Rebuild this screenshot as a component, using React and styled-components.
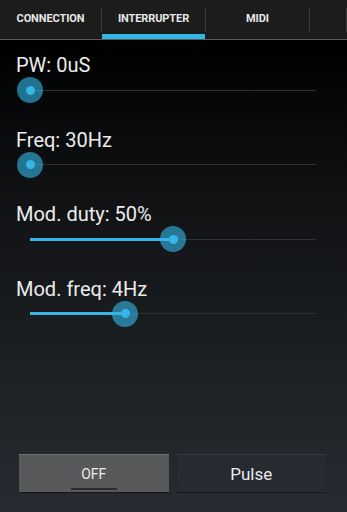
import React from 'react';
import styled, { createGlobalStyle } from 'styled-components';

const GlobalStyle = createGlobalStyle`
    html, body, #root {
        margin: 0;
        padding: 0;
        height: 100%;
    }
    body {
        font-family: Roboto, "Liberation Sans", sans-serif;
        background: #000;
        overflow: hidden;
    }
`;

const Screen = styled.div`
    display: flex;
    flex-direction: column;
    height: 512px;
    width: 347px;
    background: linear-gradient(to bottom, #000 40px, #101214 200px, #282c32 512px);
`;

const TabBar = styled.div`
    display: flex;
    align-items: center;
    height: 39px;
    background: #1c1c1c;
    border-bottom: 1px solid #5a5a5a;
    overflow: hidden;
`;

const Tab = styled.div`
    flex-shrink: 0;
    width: ${p => p.w}px;
    height: 39px;
    display: flex;
    align-items: center;
    justify-content: center;
    padding-bottom: 2px;
    box-sizing: border-box;
    font-size: 11px;
    font-weight: bold;
    color: #e8e8e8;
    letter-spacing: -0.1px;
    box-shadow: ${p => (p.active ? 'inset 0 -5px 0 #33b5e5' : 'none')};
`;

const Divider = styled.div`
    flex-shrink: 0;
    width: 1px;
    height: 24px;
    background: #3c3c3c;
`;

const Content = styled.div`
    display: flex;
    flex-direction: column;
    padding: 14px 0 0 16px;
`;

const Section = styled.div`
    height: 74.5px;
`;

const Label = styled.div`
    font-size: 20px;
    line-height: 22px;
    color: #ececec;
`;

const SliderRow = styled.div`
    position: relative;
    height: 28px;
    width: 286px;
    margin-left: 14px;
    display: flex;
    align-items: center;
`;

const Track = styled.div`
    width: 100%;
    height: 1px;
    background: #2e3236;
`;

const Fill = styled.div`
    position: absolute;
    left: 0;
    top: 12.5px;
    height: 3px;
    background: #33b5e5;
`;

const Thumb = styled.div`
    position: absolute;
    top: 1px;
    width: 26px;
    height: 26px;
    margin-left: -13px;
    border-radius: 50%;
    background: rgba(51, 181, 229, 0.62);
    display: flex;
    align-items: center;
    justify-content: center;

    &::after {
        content: '';
        width: 9px;
        height: 9px;
        border-radius: 50%;
        background: #36b6e6;
    }
`;

const Buttons = styled.div`
    margin-top: auto;
    display: flex;
    gap: 8px;
    padding: 0 21px 20px 19px;
`;

const Button = styled.div`
    position: relative;
    flex: 1;
    height: 37px;
    display: flex;
    align-items: center;
    justify-content: center;
    border-top: 1px solid ${p => (p.light ? '#6a6d6f' : '#34393f')};
    background: ${p => (p.light ? '#57595b' : '#262b31')};
    color: #ececec;
    font-size: ${p => (p.light ? '14px' : '17px')};
    box-shadow: 0 1px 1px rgba(0, 0, 0, 0.4);
`;

const ToggleLine = styled.div`
    position: absolute;
    bottom: 2px;
    left: 50%;
    margin-left: -23px;
    width: 46px;
    height: 2px;
    background: #2c2d2e;
`;

const sliders = [
    { label: 'PW: 0uS', value: 0 },
    { label: 'Freq: 30Hz', value: 0 },
    { label: 'Mod. duty: 50%', value: 0.5 },
    { label: 'Mod. freq: 4Hz', value: 0.333 },
];

const Slider = ({ value }) => (
    <SliderRow>
        <Track />
        <Fill style={{ width: `${value * 100}%` }} />
        <Thumb style={{ left: `${value * 100}%` }} />
    </SliderRow>
);

const App = () => (
    <Screen>
        <GlobalStyle />
        <TabBar>
            <Tab w={101}>CONNECTION</Tab>
            <Divider />
            <Tab w={103} active>INTERRUPTER</Tab>
            <Divider />
            <Tab w={103}>MIDI</Tab>
            <Divider />
            <Tab w={36} />
            <Divider />
        </TabBar>
        <Content>
            {sliders.map(s => (
                <Section key={s.label}>
                    <Label>{s.label}</Label>
                    <Slider value={s.value} />
                </Section>
            ))}
        </Content>
        <Buttons>
            <Button light>
                OFF
                <ToggleLine />
            </Button>
            <Button>Pulse</Button>
        </Buttons>
    </Screen>
);

export default App;
